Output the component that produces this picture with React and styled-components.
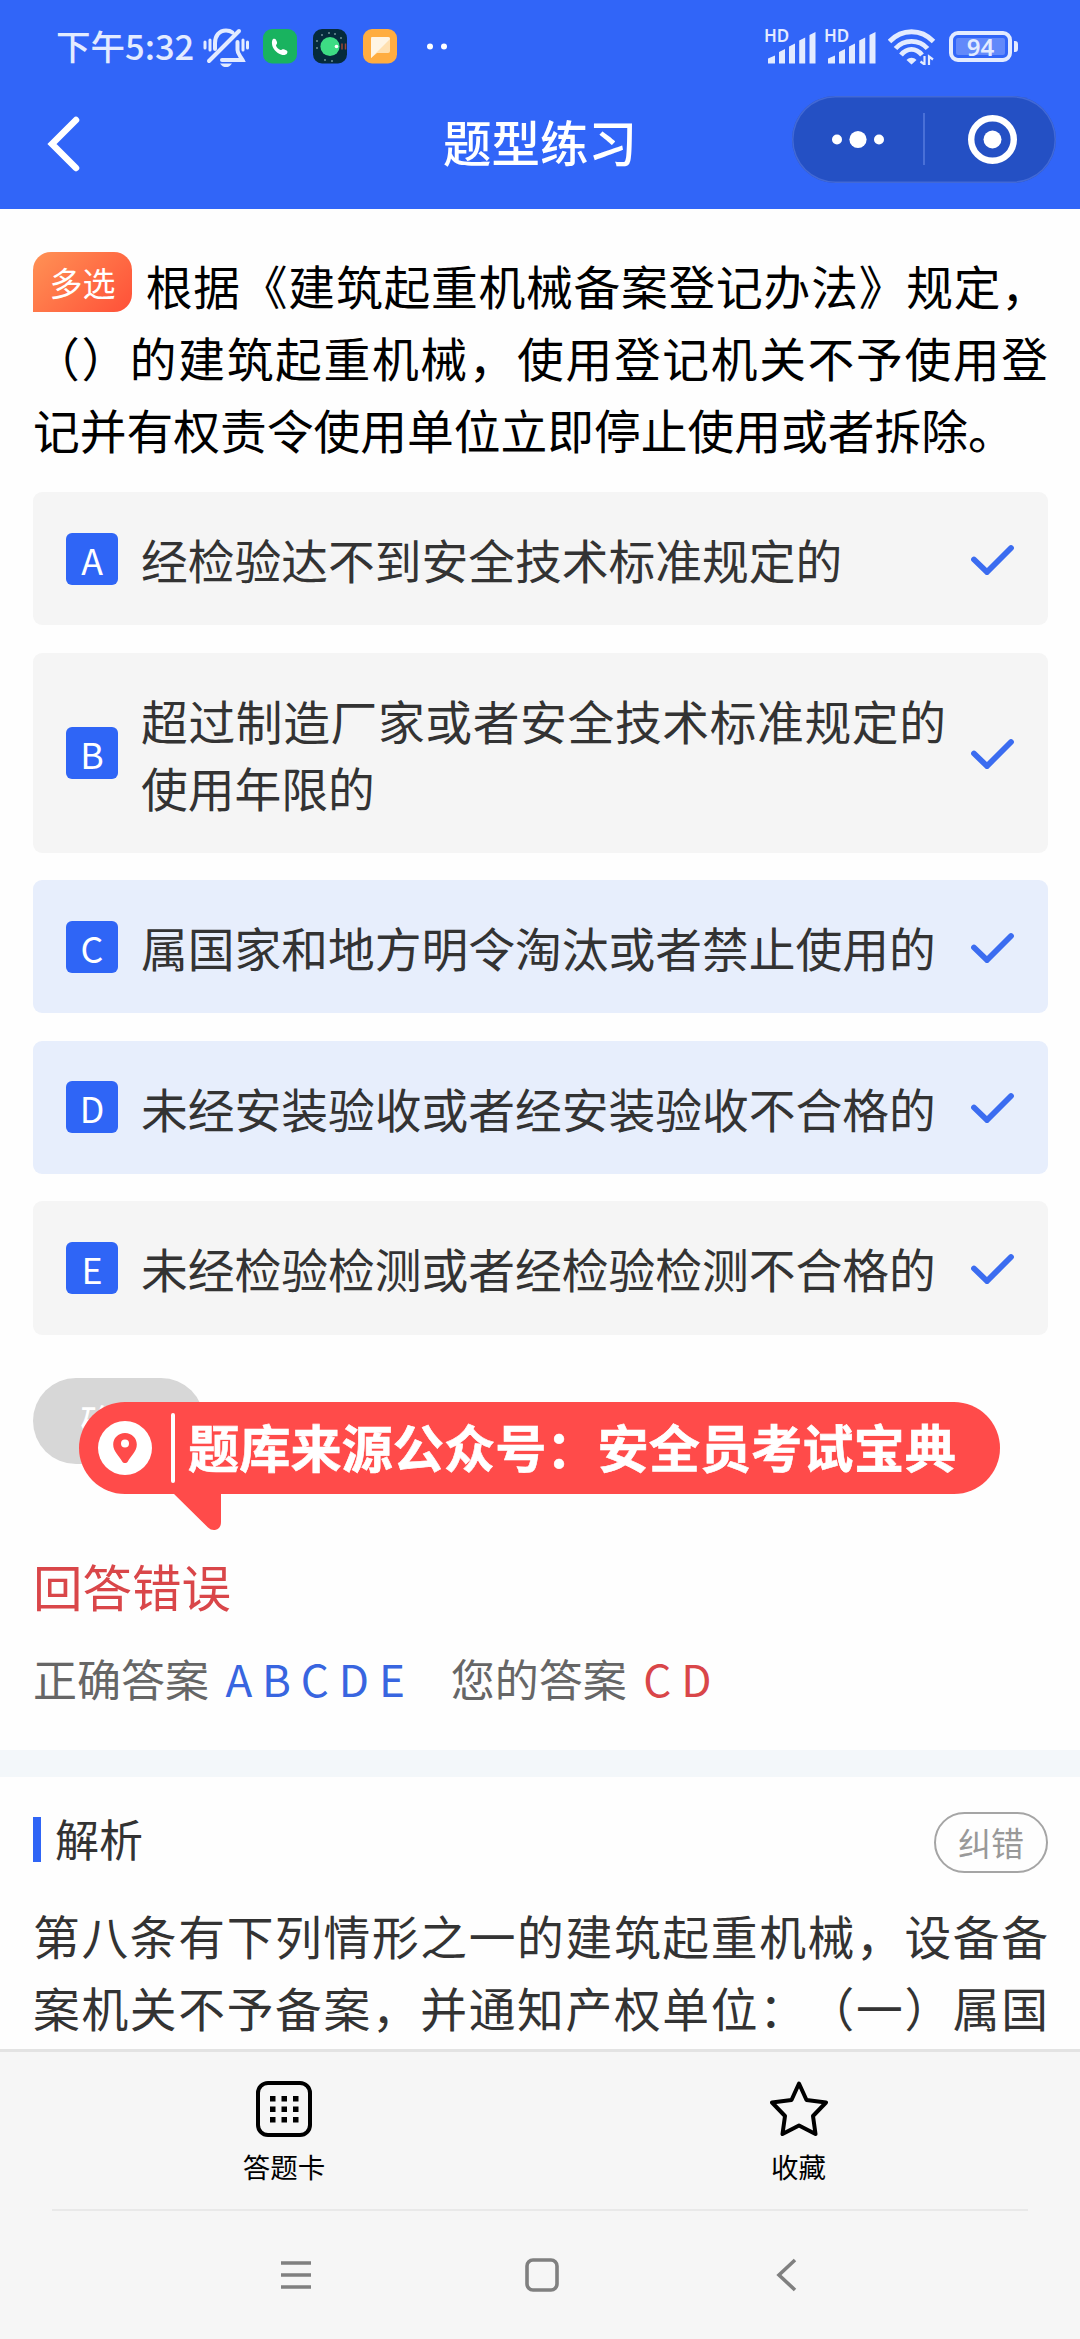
import React from 'react';
import styled, { createGlobalStyle } from 'styled-components';

const OPTIONS = [
  { key: 'A', text: '经检验达不到安全技术标准规定的' },
  { key: 'B', text: '超过制造厂家或者安全技术标准规定的使用年限的' },
  { key: 'C', text: '属国家和地方明令淘汰或者禁止使用的', selected: true },
  { key: 'D', text: '未经安装验收或者经安装验收不合格的', selected: true },
  { key: 'E', text: '未经检验检测或者经检验检测不合格的' },
];

const App = () => {
  return (
    <Page>
      <GlobalStyle />
      <Header>
        <StatusBar />
        <TitleBar>
          <BackIcon viewBox="0 0 34 58">
            <path d="M30 5 L6 29 L30 53" />
          </BackIcon>
          <Title>题型练习</Title>
          <Capsule>
            <svg width="264" height="87" viewBox="0 0 264 87" fill="#fff">
              <circle cx="45" cy="43.5" r="5" />
              <circle cx="66" cy="43.5" r="8.6" />
              <circle cx="87" cy="43.5" r="5" />
              <path d="M132 17v52" stroke="#5479dc" strokeWidth="1.6" />
              <circle cx="200.5" cy="43.5" r="21.3" fill="none" stroke="#fff" strokeWidth="6.4" />
              <circle cx="200.5" cy="43.5" r="9" />
            </svg>
          </Capsule>
        </TitleBar>
      </Header>

      <Main>
        <Question>
          <TypeBadge>多选</TypeBadge>
          根据《建筑起重机械备案登记办法》规定，（）的建筑起重机械，使用登记机关不予使用登记并有权责令使用单位立即停止使用或者拆除。
        </Question>
        <OptionList>
          {OPTIONS.map((o) => (
            <Option key={o.key} $selected={o.selected}>
              <OptionKey>{o.key}</OptionKey>
              <OptionText>{o.text}</OptionText>
              <CheckIcon viewBox="0 0 44 32">
                <path d="M3 16.5 L16 29 L40 5" />
              </CheckIcon>
            </Option>
          ))}
        </OptionList>
        <SubmitRow>
          <SubmitButton>确定</SubmitButton>
          <Bubble>
            <PinIcon viewBox="0 0 54 54">
              <circle cx="27" cy="27" r="27" fill="#fff" />
              <path
                d="M27 12c-6.8 0-11.8 5.2-11.8 11.6 0 6.6 5.6 11.4 9 16.8 1.3 2.1 4.3 2.1 5.6 0 3.4-5.4 9-10.2 9-16.8C38.8 17.2 33.8 12 27 12z"
                fill="#ff4b4a"
              />
              <circle cx="27" cy="22.5" r="4" fill="#fff" />
            </PinIcon>
            <BubbleLine />
            <BubbleText>题库来源公众号：安全员考试宝典</BubbleText>
            <BubbleTail viewBox="0 0 50 40">
              <path d="M0 0 L35 34.5 Q38 37.5 42 37 Q48 36 48 29 L48 0z" />
            </BubbleTail>
          </Bubble>
        </SubmitRow>
        <Result>回答错误</Result>
        <AnswerRow>
          <span>正确答案</span>
          <Answer $color="#3865e0">A B C D E</Answer>
          <YourAnswer>您的答案</YourAnswer>
          <Answer $color="#d94649">C D</Answer>
        </AnswerRow>
      </Main>

      <Band />

      <Analysis>
        <AnalysisHead>
          <AnalysisTitle>解析</AnalysisTitle>
          <ReportButton>纠错</ReportButton>
        </AnalysisHead>
        <AnalysisText>
          第八条有下列情形之一的建筑起重机械，设备备案机关不予备案，并通知产权单位：（一）属国
        </AnalysisText>
      </Analysis>

      <Footer>
        <Tabs>
          <Tab $width="464px">
            <svg width="58" height="58" viewBox="0 0 58 58">
              <rect x="3" y="3" width="52" height="52" rx="10" fill="none" stroke="#000" strokeWidth="4" />
              {[16, 26.5, 37].map((y) =>
                [15, 26.5, 38].map((x) => (
                  <rect key={x + '-' + y} x={x} y={y} width="5.5" height="5.5" />
                ))
              )}
            </svg>
            <TabLabel>答题卡</TabLabel>
          </Tab>
          <Tab $width="459px">
            <svg width="58" height="58" viewBox="0 0 58 58">
              <path
                d="M29 3.5 L36.5 20 L56 22.5 L43 36 L45.500 54 L29 45.500 L12.500 54 L15 36 L2 22.500 L21.500 20z"
                fill="none"
                stroke="#000"
                strokeWidth="4"
                strokeLinejoin="round"
              />
            </svg>
            <TabLabel>收藏</TabLabel>
          </Tab>
        </Tabs>
        <SystemNav>
          <svg width="36" height="36" viewBox="0 0 36 36">
            <path d="M3 6h30M3 18h30M3 30h30" />
          </svg>
          <svg width="36" height="36" viewBox="0 0 36 36">
            <rect x="3" y="3" width="30" height="30" rx="6" />
          </svg>
          <svg width="36" height="36" viewBox="0 0 36 36">
            <path d="M26 3 L10 18 L26 33" />
          </svg>
        </SystemNav>
      </Footer>
    </Page>
  );
};

const Signal = () => (
  <SignalBox>
    <Hd>HD</Hd>
    <svg width="48" height="32" viewBox="0 0 48 32" fill="#e3ebff">
      <path d="M0 31.5v-5l7-3v8zM11 31.5V20l6-3v14.5zM21 31.5V14.5l6-3v20zM31.2 31.5V8.5l6-3v26zM41.5 31.5V3l6-3v31.5z" />
    </svg>
  </SignalBox>
);

const StatusBar = () => (
  <Status>
    <Time>下午5:32</Time>
    <StatusIcons width="248" height="40" viewBox="0 0 248 40">
      {/* muted bell */}
      <g fill="none" stroke="#e3ebff" strokeWidth="3" strokeLinecap="round">
        <path d="M12 21v-6c0-7 4-12.5 11-12.5 2.5 0 5 .8 6.5 2" strokeWidth="4" />
        <path d="M34.5 14v8c0 4 3 6 5 10H19" strokeWidth="4" />
        <path d="M6 33 L36 3" strokeWidth="4" />
        <path d="M2 14v6M7 12v10M40 12v10M44.5 14v6" />
      </g>
      <path d="M17 35.5h12c-2 3-4 3.5-6 3.5s-4-.5-6-3.5z" fill="#e3ebff" />
      {/* phone */}
      <rect x="60" y="1" width="34" height="34.5" rx="9" fill="#19b35f" />
      <path
        d="M70 11c2-1 3 0 4 3 .5 2-1 2.500-1 3.500.5 2 2.500 4 4.500 4.500 1 0 2-1.300 4-.5 3 1 3.500 2 2.500 4-1 1.500-3.500 2-6 1-5-2-8.500-6-9-10.500-.2-2 0-4 1-5z"
        fill="#fff"
      />
      {/* android */}
      <rect x="110" y="1" width="34" height="34.5" rx="9" fill="#052b3c" />
      <circle cx="127" cy="18.5" r="9.6" fill="#3ddc84" />
      <circle cx="133.5" cy="18.5" r="1.8" fill="#fff" />
      <path d="M139 15.5v6M142.5 15.5v6" stroke="#9b4635" strokeWidth="1.5" />
      <g fill="#b9d8d8">
        <circle cx="119" cy="7" r=".8" />
        <circle cx="126" cy="5" r=".8" />
        <circle cx="132" cy="6" r=".8" />
        <circle cx="138" cy="10" r=".8" />
        <circle cx="114" cy="13" r=".8" />
        <circle cx="114" cy="20" r=".8" />
        <circle cx="122" cy="32" r=".8" />
        <circle cx="129" cy="33" r=".8" />
      </g>
      {/* message */}
      <rect x="160" y="1" width="34" height="34.5" rx="9" fill="#ffad40" />
      <path d="M169 9h16q2 0 2 2v12q0 2-2 2h-11l-6 5V11q0-2 1-2z" fill="#ffe0b0" />
      <path d="M169 9h16q2 0 2 2L168 30V11q0-2 1-2z" fill="#fff5e4" />
      <circle cx="227" cy="18.5" r="3" fill="#fff" />
      <circle cx="241" cy="18.5" r="3" fill="#fff" />
    </StatusIcons>
    <StatusRight>
      <Signal />
      <Signal />
      <WifiIcon width="48" height="36" viewBox="0 0 48 36">
        <g fill="none" stroke="#e3ebff" strokeWidth="4.8">
          <path d="M1.5 12.5C14 -.5 33 -.5 45.5 12.5" />
          <path d="M7.5 19.5C16 10 31 10 39.5 19.5" />
          <path d="M13 26C19 18.5 28 18.5 34 26" />
        </g>
        <path d="M18.5 31c3-3 7-3 10 0l-5 4.5z" fill="#e3ebff" />
        <path d="M36.5 27v8.5l-4-3M41 36v-8.5l4 3" fill="none" stroke="#e3ebff" strokeWidth="2.2" />
      </WifiIcon>
      <Battery>94</Battery>
    </StatusRight>
  </Status>
);

const GlobalStyle = createGlobalStyle`
  * {
    box-sizing: border-box;
  }
  body {
    margin: 0;
    background: #fff;
    font-family: 'Noto Sans CJK SC', sans-serif;
    text-spacing-trim: space-all;
  }
  svg {
    display: block;
    flex-shrink: 0;
  }
`;

const Page = styled.div`
  width: 1080px;
  height: 2339px;
  display: flex;
  flex-direction: column;
  overflow: hidden;
  background: #fefefe;
`;

//Header
const Header = styled.header`
  height: 208.5px;
  flex-shrink: 0;
  background: #3165f8;
  color: #fff;
`;
const Status = styled.div`
  height: 96px;
  padding: 27px 61px 0 56px;
  display: flex;
  align-items: flex-start;
`;
const Time = styled.div`
  width: 147px;
  font-size: 34.5px;
  font-weight: 500;
  line-height: 36px;
  white-space: nowrap;
  color: #e3ebff;
`;
const StatusIcons = styled.svg`
  margin-top: 1px;
`;
const StatusRight = styled.div`
  margin-left: auto;
  display: flex;
  align-items: flex-start;
`;
const SignalBox = styled.div`
  position: relative;
  width: 48px;
  margin: 5px 12px 0 0;
`;
const Hd = styled.span`
  position: absolute;
  left: -4px;
  top: -4px;
  font: 600 17px/16px 'Noto Sans', sans-serif;
  color: #e3ebff;
`;
const WifiIcon = styled.svg`
  margin-top: 2px;
`;
const Battery = styled.div`
  position: relative;
  width: 63px;
  height: 31px;
  margin: 4px 7px 0 13px;
  border: 4px solid #e3ebff;
  border-radius: 9px;
  background: #6289fa content-box;
  padding: 3px;
  font: 600 24px/17px 'Noto Sans', sans-serif;
  text-align: center;
  color: #e3ebff;
  &::after {
    content: '';
    position: absolute;
    right: -10px;
    top: 6px;
    width: 4px;
    height: 11px;
    border-radius: 0 3px 3px 0;
    background: #e3ebff;
  }
`;
const TitleBar = styled.div`
  height: 87px;
  padding: 0 24px 0 46px;
  display: grid;
  grid-template-columns: 264px 1fr 264px;
  align-items: center;
`;
const BackIcon = styled.svg`
  width: 34px;
  height: 58px;
  margin-top: 8px;
  fill: none;
  stroke: #fff;
  stroke-width: 6.5;
  stroke-linecap: round;
`;
const Title = styled.h1`
  margin: 3px 0 0;
  padding-right: 22px;
  font-size: 48.5px;
  font-weight: 500;
  line-height: 60px;
  text-align: center;
`;
const Capsule = styled.div`
  height: 87px;
  border-radius: 44px;
  background: #2450c4;
  box-shadow: inset 0 0 0 1.5px #4269d6;
`;

//Question
const Main = styled.main`
  height: 1541.5px;
  flex-shrink: 0;
  padding: 40px 32px 0 33px;
`;
const Question = styled.div`
  height: 243.5px;
  font-size: 46.75px;
  line-height: 72px;
  text-align: justify;
  color: #000;
`;
const TypeBadge = styled.span`
  display: inline-block;
  width: 99px;
  height: 60px;
  margin-right: 13px;
  border-radius: 18px 18px 18px 0;
  background: linear-gradient(135deg, #ff9255, #ff5038);
  color: #fff;
  font-size: 33px;
  line-height: 61px;
  text-align: center;
  text-align-last: center;
  vertical-align: 9px;
`;
const OptionList = styled.div`
  display: flex;
  flex-direction: column;
  gap: 27.5px;
`;
const Option = styled.div`
  padding: 33px;
  display: flex;
  align-items: center;
  border-radius: 9px;
  background: ${(p) => (p.$selected ? '#e7eefc' : '#f5f5f5')};
`;
const OptionKey = styled.div`
  width: 52px;
  height: 52px;
  flex-shrink: 0;
  border-radius: 6px;
  background: #2f65f6;
  color: #fff;
  font-size: 35.75px;
  line-height: 53px;
  text-align: center;
`;
const OptionText = styled.div`
  width: 805px;
  margin: 0 25px 0 23px;
  font-size: 46.75px;
  line-height: 67.1px;
  text-align: justify;
  color: #333;
`;
const CheckIcon = styled.svg`
  width: 44px;
  height: 32px;
  fill: none;
  stroke: #3b6cf0;
  stroke-width: 5.8;
  stroke-linecap: round;
`;
const SubmitRow = styled.div`
  position: relative;
  margin-top: 43.5px;
`;
const SubmitButton = styled.button`
  display: block;
  width: 171px;
  height: 86px;
  padding: 0;
  border: 0;
  border-radius: 43px;
  background: #d7d7d7;
  color: #fff;
  font: 38.5px/84px 'Noto Sans CJK SC', sans-serif;
`;
//Callout floating over the button
const Bubble = styled.div`
  position: absolute;
  left: 46px;
  top: 24px;
  width: 921px;
  height: 92px;
  display: flex;
  align-items: center;
  padding-left: 19px;
  border-radius: 46px;
  background: #ff4b4a;
`;
const PinIcon = styled.svg`
  width: 54px;
  height: 54px;
`;
const BubbleLine = styled.div`
  width: 4px;
  height: 70px;
  margin: 0 13px 0 19px;
  border-radius: 2px;
  background: #fff;
`;
const BubbleText = styled.div`
  margin-top: -4px;
  font-size: 51.2px;
  font-weight: 700;
  line-height: 60px;
  white-space: nowrap;
  color: #fff;
  -webkit-text-stroke: 0.6px #fff;
`;
const BubbleTail = styled.svg`
  position: absolute;
  left: 94px;
  top: 91px;
  width: 50px;
  height: 40px;
  fill: #ff4b4a;
`;
const Result = styled.div`
  margin-top: 84.5px;
  font-size: 49.5px;
  line-height: 74px;
  color: #d94649;
`;
const AnswerRow = styled.div`
  margin-top: 22px;
  display: flex;
  font-size: 44px;
  line-height: 66px;
  color: #666;
`;
const Answer = styled.span`
  margin-left: 16.5px;
  color: ${(p) => p.$color};
`;
const YourAnswer = styled.span`
  margin-left: 46px;
`;

//Analysis
const Band = styled.div`
  height: 27px;
  flex-shrink: 0;
  background: #f3f7fa;
`;
const Analysis = styled.section`
  height: 272px;
  flex-shrink: 0;
  padding: 35px 32px 0 33px;
  overflow: hidden;
`;
const AnalysisHead = styled.div`
  display: flex;
  justify-content: space-between;
`;
const AnalysisTitle = styled.div`
  height: 45px;
  margin-top: 5px;
  padding-left: 14px;
  border-left: 8px solid #2f65f6;
  font-size: 44px;
  line-height: 42px;
  color: #333;
`;
const ReportButton = styled.button`
  width: 114px;
  height: 61px;
  padding: 0;
  border: 2px solid #a5a5a5;
  border-radius: 31px;
  background: #fefefe;
  color: #999;
  font: 33px/55px 'Noto Sans CJK SC', sans-serif;
`;
const AnalysisText = styled.div`
  margin-top: 26px;
  font-size: 46.75px;
  line-height: 71.5px;
  text-align: justify;
  text-align-last: justify;
  color: #333;
`;

//Footer
const Footer = styled.footer`
  flex: 1;
  border-top: 3px solid #e3e3e3;
  background: #f6f6f6;
`;
const Tabs = styled.div`
  height: 159px;
  margin: 0 52px;
  padding-top: 28px;
  display: flex;
  justify-content: space-between;
  border-bottom: 2px solid #e9e9e9;
`;
const Tab = styled.div`
  width: ${(p) => p.$width};
  display: flex;
  flex-direction: column;
  align-items: center;
`;
const TabLabel = styled.div`
  margin-top: 8px;
  font-size: 27.5px;
  line-height: 40px;
  color: #000;
`;
const SystemNav = styled.nav`
  padding: 46px 275px 0 278px;
  display: flex;
  justify-content: space-between;
  svg {
    fill: none;
    stroke: #808080;
    stroke-width: 3.6;
  }
`;

export default App;
